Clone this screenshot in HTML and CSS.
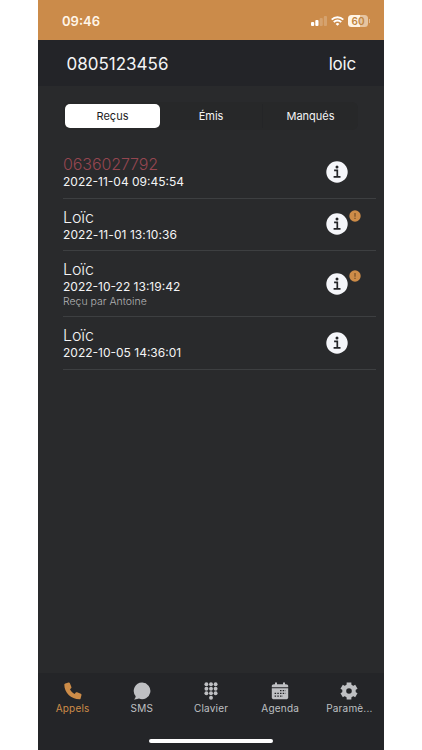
FILE: index.html
```html
<!DOCTYPE html>
<html lang="fr">
<head>
  <meta charset="UTF-8">
  <meta name="viewport" content="width=device-width, initial-scale=1.0">
  <title>Appels</title>
  <link rel="stylesheet" href="styles.css">
</head>
<body>
  <div class="phone">
    <!-- Barre d'état -->
    <div class="status-bar">
      <span class="time">09:46</span>
      <div class="status-icons">
        <svg width="16" height="10" viewBox="0 0 16 10" fill="#fff">
          <rect x="0" y="6" width="3.2" height="4" rx="1"/>
          <rect x="4.3" y="4" width="3.2" height="6" rx="1"/>
          <rect x="8.6" y="2" width="3.2" height="8" rx="1" opacity="0.2"/>
          <rect x="12.8" y="0" width="3.2" height="10" rx="1" opacity="0.2"/>
        </svg>
        <svg class="wifi" width="13" height="10" viewBox="0 0 13 10" fill="none" stroke="#fff" stroke-width="1.9">
          <path d="M0.7 3.6a8.3 8.3 0 0 1 11.6 0"/>
          <path d="M2.8 6.1a5.2 5.2 0 0 1 7.4 0"/>
          <path d="M6.5 9.8L4.6 7.9a2.7 2.7 0 0 1 3.8 0z" fill="#fff" stroke="none"/>
        </svg>
        <div class="battery">60</div>
        <span class="battery-tip"></span>
      </div>
    </div>

    <div class="header">
      <span class="numero">0805123456</span>
      <span class="user">loic</span>
    </div>

    <div class="content">
      <div class="segments">
        <div class="segment active">Reçus</div>
        <div class="segment">Émis</div>
        <div class="segment last">Manqués</div>
      </div>

      <!-- Liste des appels -->
      <div class="calls">
        <div class="call">
          <div class="call-text">
            <div class="name missed">0636027792</div>
            <div class="date">2022-11-04 09:45:54</div>
          </div>
          <div class="info">
            <svg width="22" height="22" viewBox="0 0 22 22"><circle cx="11" cy="11" r="10.7" fill="#f5f6fa"/><circle cx="11" cy="6" r="1.5" fill="#242528"/><path d="M8.1 9.3h3.2v6.2M7.6 15.8h6.9" fill="none" stroke="#242528" stroke-width="1.7"/></svg>
          </div>
        </div>
        <div class="call">
          <div class="call-text">
            <div class="name">Loïc</div>
            <div class="date narrow">2022-11-01 13:10:36</div>
          </div>
          <div class="info">
            <svg width="22" height="22" viewBox="0 0 22 22"><circle cx="11" cy="11" r="10.7" fill="#f5f6fa"/><circle cx="11" cy="6" r="1.5" fill="#242528"/><path d="M8.1 9.3h3.2v6.2M7.6 15.8h6.9" fill="none" stroke="#242528" stroke-width="1.7"/></svg>
            <svg class="badge" width="12" height="12" viewBox="0 0 12 12"><circle cx="6" cy="6" r="5.7" fill="#cd8c48"/><path d="M6 3v3.7M6 7.8v1.2" stroke="#704a25" stroke-width="1.1"/></svg>
          </div>
        </div>
        <div class="call">
          <div class="call-text">
            <div class="name">Loïc</div>
            <div class="date">2022-10-22 13:19:42</div>
            <div class="by">Reçu par Antoine</div>
          </div>
          <div class="info">
            <svg width="22" height="22" viewBox="0 0 22 22"><circle cx="11" cy="11" r="10.7" fill="#f5f6fa"/><circle cx="11" cy="6" r="1.5" fill="#242528"/><path d="M8.1 9.3h3.2v6.2M7.6 15.8h6.9" fill="none" stroke="#242528" stroke-width="1.7"/></svg>
            <svg class="badge" width="12" height="12" viewBox="0 0 12 12"><circle cx="6" cy="6" r="5.7" fill="#cd8c48"/><path d="M6 3v3.7M6 7.8v1.2" stroke="#704a25" stroke-width="1.1"/></svg>
          </div>
        </div>
        <div class="call">
          <div class="call-text">
            <div class="name">Loïc</div>
            <div class="date">2022-10-05 14:36:01</div>
          </div>
          <div class="info">
            <svg width="22" height="22" viewBox="0 0 22 22"><circle cx="11" cy="11" r="10.7" fill="#f5f6fa"/><circle cx="11" cy="6" r="1.5" fill="#242528"/><path d="M8.1 9.3h3.2v6.2M7.6 15.8h6.9" fill="none" stroke="#242528" stroke-width="1.7"/></svg>
          </div>
        </div>
      </div>
    </div>

    <!-- Onglets -->
    <div class="tab-bar">
      <div class="tabs">
        <div class="tab active">
          <svg width="18" height="18" viewBox="0 0 18 18" fill="currentColor"><path d="M1.3 1.5L4.6.6c.6-.1 1.100.1 1.300.6l1.500 3.700c.2.5.1 1-.3 1.300L6 7.200c1 2 2.500 3.600 4.600 4.700l1.200-1.300c.3-.4.8-.5 1.300-.3l3.700 1.500c.5.2.8.7.7 1.300l-.9 3.300c-.1.600-.6.900-1.100.9C7 17.300.3 10.700.3 2.600c0-.5.4-.9 1-1.100z"/></svg>
          <span>Appels</span>
        </div>
        <div class="tab">
          <svg width="18" height="18" viewBox="0 0 18 18" fill="currentColor"><path d="M9.2.6a8.300 8.300 0 1 1-3.200 16c-1.300.6-3 .9-4.900.8 1-1 1.500-2.100 1.600-3.200A8.300 8.300 0 0 1 9.200.6z"/></svg>
          <span>SMS</span>
        </div>
        <div class="tab">
          <svg width="18" height="18" viewBox="0 0 18 18" fill="currentColor">
            <circle cx="4.4" cy="2.2" r="1.95"/><circle cx="9" cy="2.2" r="1.95"/><circle cx="13.6" cy="2.2" r="1.95"/>
            <circle cx="4.4" cy="6.7" r="1.95"/><circle cx="9" cy="6.7" r="1.95"/><circle cx="13.6" cy="6.7" r="1.95"/>
            <circle cx="4.4" cy="11.2" r="1.95"/><circle cx="9" cy="11.2" r="1.95"/><circle cx="13.6" cy="11.2" r="1.95"/>
            <circle cx="9" cy="15.7" r="1.95"/>
          </svg>
          <span>Clavier</span>
        </div>
        <div class="tab">
          <svg width="18" height="18" viewBox="0 0 18 18" fill="currentColor">
            <path d="M3 2.200h1V.6h2v1.600h6V.6h2v1.600h1c1.300 0 2.200.8 2.200 1.800v1.200H.8V4c0-1 .9-1.800 2.200-1.800z"/>
            <path d="M.8 6.300h16.400v8.900c0 1.300-.9 2.100-2.200 2.100H3c-1.300 0-2.200-.8-2.200-2.100z"/>
            <path d="M9 8.600h5.700M3.600 11.400h11.100M3.600 14.200h8.400" fill="none" stroke="#242528" stroke-width="1.300" stroke-dasharray="1.500 1.200"/>
          </svg>
          <span>Agenda</span>
        </div>
        <div class="tab">
          <svg width="18" height="18" viewBox="0 0 18 18" fill="none" stroke="currentColor">
            <circle cx="9" cy="9" r="4.800" stroke-width="4"/>
            <path d="M9 .5v3M9 14.500v3M1.640 4.750l2.600 1.500M13.760 11.750l2.600 1.500M1.640 13.250l2.600-1.500M13.760 6.250l2.600-1.500" stroke-width="4.700"/>
          </svg>
          <span>Paramè...</span>
        </div>
      </div>
      <div class="home-indicator"></div>
    </div>
  </div>
</body>
</html>
```
FILE: styles.css
```css
* {
  box-sizing: border-box;
}

body {
  margin: 0;
  background-color: #fff;
  font-family: Inter, "Liberation Sans", sans-serif;
  color: #f4f4f5;
}

svg {
  display: block;
  flex: none;
}

.phone {
  width: 346px;
  height: 750px;
  margin-left: 38px;
  background-color: #292a2c;
  display: flex;
  flex-direction: column;
}

.status-bar {
  height: 40px;
  background-color: #cb8b4a;
  display: flex;
  justify-content: space-between;
  padding: 2px 14px 0 24px;
  align-items: center;
}

.time {
  font-size: 13px;
  font-weight: 600;
  color: #fff5e8;
}

.status-icons {
  display: flex;
  align-items: center;
}

.wifi {
  margin: 0 4px;
}

.battery {
  width: 20px;
  height: 12px;
  border-radius: 3.5px;
  background: linear-gradient(to right, #fff4e6 60%, #e6c5a1 60%);
  color: #c0843f;
  font-size: 10px;
  font-weight: 600;
  line-height: 12px;
  text-align: center;
}

.battery-tip {
  width: 1px;
  height: 4px;
  margin-left: 1px;
  background-color: #e2bc93;
}

.header {
  height: 46px;
  background-color: #232428;
  display: flex;
  justify-content: space-between;
  align-items: center;
  padding: 2px 28px 0 28.5px;
  font-size: 17px;
}

.user {
  letter-spacing: -0.2px;
}

.content {
  flex: 1;
  padding-top: 16px;
}

.segments {
  width: 295px;
  height: 28px;
  margin-left: 25px;
  padding: 2px 0 2px 2px;
  border-radius: 6px;
  background-color: #272829;
  display: flex;
}

.segment {
  flex: 0 0 102px;
  font-size: 11px;
  line-height: 24px;
  text-align: center;
}

.segment.last {
  flex: 0 0 96px;
  border-left: 1px solid #242527;
}

.segment.active {
  flex: 0 0 95px;
  height: 24px;
  border-radius: 5px;
  background-color: #fff;
  color: #1c1c1e;
}

.calls {
  margin: 16px 8px 0 25px;
}

.call {
  display: flex;
  align-items: center;
  justify-content: space-between;
  height: 52.5px;
  border-bottom: 1px solid #3d3f41;
}

.call:nth-child(3) {
  height: 66px;
}

.call-text {
  padding-top: 2px;
}

.call:nth-child(3) .call-text {
  padding-top: 0;
}

.name {
  font-size: 16px;
  font-weight: 300;
  line-height: 18px;
  letter-spacing: -0.1px;
}

.name.missed {
  color: #944650;
}

.date {
  font-size: 12px;
  line-height: 17px;
}

.date.narrow {
  letter-spacing: 0.07px;
}

.by {
  font-size: 10.5px;
  font-weight: 300;
  line-height: 13px;
  color: #b2b3b5;
}

.info {
  position: relative;
  margin-right: 28px;
}

.badge {
  position: absolute;
  left: 22.5px;
  top: -3px;
}

.tab-bar {
  height: 77px;
  background-color: #242528;
  display: flex;
  flex-direction: column;
  justify-content: space-between;
  align-items: center;
}

.tabs {
  width: 100%;
  padding-top: 9px;
  display: flex;
}

.tab {
  flex: 1;
  display: flex;
  flex-direction: column;
  align-items: center;
  color: #bfc0c3;
  font-size: 10px;
  letter-spacing: 0.2px;
}

.tab span {
  margin-top: 2px;
  line-height: 13px;
}

.tab.active {
  color: #cd8c48;
}

.home-indicator {
  width: 124px;
  height: 4px;
  margin-bottom: 7px;
  border-radius: 2px;
  background-color: #fff;
}
```
